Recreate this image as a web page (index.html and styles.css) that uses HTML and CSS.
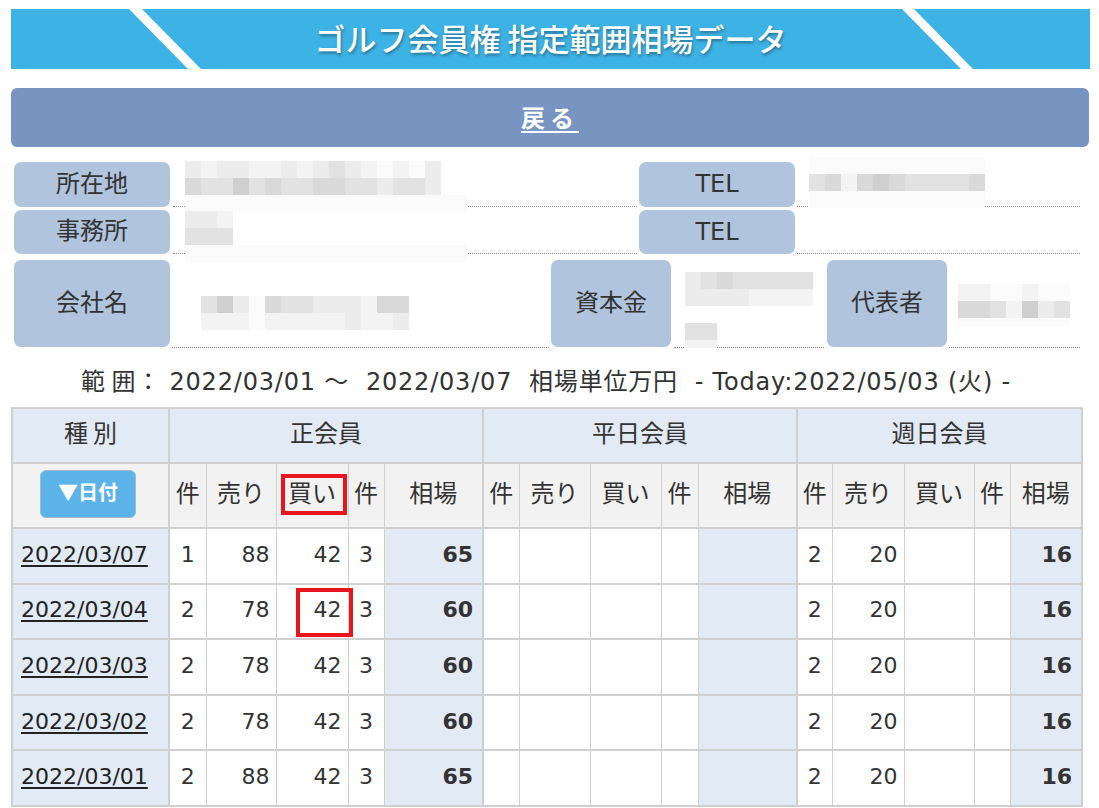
FILE: index.html
```html
<!DOCTYPE html>
<html lang="ja">
<head>
<meta charset="utf-8">
<title>ゴルフ会員権 指定範囲相場データ</title>
<link rel="stylesheet" href="styles.css">
</head>
<body>
<div class="page">
  <header class="banner"><h1>ゴルフ会員権 指定範囲相場データ</h1></header>
  <a class="back" href="#"><span>戻る</span></a>

  <section class="info">
    <div class="irow r1">
      <div class="lbl w156">所在地</div>
      <div class="val v1">
        <div class="mz m-addr">
          <div class="mrow"><i class="s2"></i><i class="s1"></i><i class="s2"></i><i class="s2"></i><i class="s1"></i><i class="s1"></i><i class="s2"></i><i class="s1"></i><i class="s2"></i><i class="s3"></i><i class="s2"></i><i class="s1"></i><i class="s0"></i><i class="s1"></i><i class="s0"></i><i class="s2"></i></div>
          <div class="mrow"><i class="s4"></i><i class="s3"></i><i class="s3"></i><i class="s5"></i><i class="s3"></i><i class="s4"></i><i class="s3"></i><i class="s3"></i><i class="s4"></i><i class="s4"></i><i class="s3"></i><i class="s3"></i><i class="s2"></i><i class="s3"></i><i class="s3"></i><i class="s2"></i></div>
          <div class="mrow"><i class="s0 wide"></i></div>
        </div>
      </div>
      <div class="lbl w156 en">TEL</div>
      <div class="val v2">
        <div class="mz m-tel">
          <div class="mrow"><i class="s0"></i><i class="s0"></i><i class="s0"></i><i class="s0"></i><i class="s0"></i><i class="s0"></i><i class="s0"></i><i class="s0"></i><i class="s0"></i><i class="s0"></i><i class="s0"></i></div>
          <div class="mrow"><i class="s3"></i><i class="s4"></i><i class="s1"></i><i class="s4"></i><i class="s5"></i><i class="s4"></i><i class="s3"></i><i class="s3"></i><i class="s3"></i><i class="s3"></i><i class="s4"></i></div>
          <div class="mrow"><i class="s0"></i><i class="s0"></i><i class="s0"></i><i class="s0"></i><i class="s0"></i><i class="s0"></i><i class="s0"></i><i class="s0"></i><i class="s0"></i><i class="s0"></i><i class="s0"></i></div>
        </div>
      </div>
    </div>

    <div class="irow r2">
      <div class="lbl w156">事務所</div>
      <div class="val v1">
        <div class="mz m-office">
          <div class="mrow"><i class="s2"></i><i class="s2"></i><i class="s1"></i></div>
          <div class="mrow"><i class="s3"></i><i class="s3"></i><i class="s3"></i></div>
          <div class="mrow"><i class="s0 wide"></i></div>
        </div>
      </div>
      <div class="lbl w156 en">TEL</div>
      <div class="val v2"></div>
    </div>

    <div class="irow r3">
      <div class="lbl w156">会社名</div>
      <div class="val v3">
        <div class="mz m-company">
          <div class="mrow"><i class="s3"></i><i class="s5"></i><i class="s2"></i><i class="s0"></i><i class="s4"></i><i class="s3"></i><i class="s3"></i><i class="s2"></i><i class="s2"></i><i class="s2"></i><i class="s1"></i><i class="s4"></i><i class="s4"></i></div>
          <div class="mrow"><i class="s1"></i><i class="s1"></i><i class="s1"></i><i class="s0"></i><i class="s1"></i><i class="s1"></i><i class="s1"></i><i class="s1"></i><i class="s1"></i><i class="s2"></i><i class="s1"></i><i class="s1"></i><i class="s2"></i></div>
        </div>
      </div>
      <div class="lbl w120">資本金</div>
      <div class="val v4">
        <div class="mz m-capital">
          <div class="mrow"><i class="s2"></i><i class="s3"></i><i class="s4"></i><i class="s3"></i><i class="s3"></i><i class="s3"></i><i class="s3"></i><i class="s3"></i></div>
          <div class="mrow"><i class="s2"></i><i class="s2"></i><i class="s2"></i><i class="s2"></i><i class="s1"></i><i class="s1"></i><i class="s1"></i><i class="s1"></i></div>
          <div class="mrow"></div>
          <div class="mrow"><i class="s3"></i><i class="s3"></i></div>
          <div class="mrow short"><i class="s1"></i><i class="s1"></i></div>
        </div>
      </div>
      <div class="lbl w120">代表者</div>
      <div class="val v5">
        <div class="mz m-rep">
          <div class="mrow"><i class="s1"></i><i class="s1"></i><i class="s0"></i><i class="s0"></i><i class="s1"></i><i class="s0"></i><i class="s0"></i></div>
          <div class="mrow"><i class="s4"></i><i class="s4"></i><i class="s3"></i><i class="s1"></i><i class="s5"></i><i class="s2"></i><i class="s3"></i></div>
          <div class="mrow short"><i class="s0"></i><i class="s0"></i><i class="s0"></i><i class="s0"></i><i class="s0"></i><i class="s0"></i><i class="s0"></i></div>
        </div>
      </div>
    </div>
  </section>

  <p class="range">範&#8201;囲：&nbsp;2022/03/01&nbsp;～&nbsp;&nbsp;2022/03/07&nbsp;&nbsp;相場単位万円&nbsp;&nbsp;-&nbsp;Today:2022/05/03&nbsp;(火)&nbsp;-</p>

  <table class="grid">
    <colgroup>
      <col class="c157">
      <col class="c37"><col class="c70"><col class="c72"><col class="c36"><col class="c99">
      <col class="c36"><col class="c71"><col class="c71"><col class="c37"><col class="c99">
      <col class="c35"><col class="c72"><col class="c70"><col class="c36"><col class="c72">
    </colgroup>
    <thead>
      <tr class="h1">
        <th>種&#8201;別</th>
        <th colspan="5" class="g">正会員</th>
        <th colspan="5" class="g">平日会員</th>
        <th colspan="5" class="g">週日会員</th>
      </tr>
      <tr class="h2">
        <th class="btncell"><button class="sort" type="button">▼日付</button></th>
        <th class="g">件</th><th>売り</th><th class="mark">買い<span class="redbox rb1"></span></th><th>件</th><th>相場</th>
        <th class="g">件</th><th>売り</th><th>買い</th><th>件</th><th>相場</th>
        <th class="g">件</th><th>売り</th><th>買い</th><th>件</th><th>相場</th>
      </tr>
    </thead>
    <tbody>
      <tr>
        <td class="date"><a href="#">2022/03/07</a></td>
        <td class="g n">1</td><td class="r">88</td><td class="r">42</td><td class="n">3</td><td class="p">65</td>
        <td class="g n"></td><td class="r"></td><td class="r"></td><td class="n"></td><td class="p"></td>
        <td class="g n">2</td><td class="r">20</td><td class="r"></td><td class="n"></td><td class="p">16</td>
      </tr>
      <tr>
        <td class="date"><a href="#">2022/03/04</a></td>
        <td class="g n">2</td><td class="r">78</td><td class="r mark">42<span class="redbox rb2"></span></td><td class="n">3</td><td class="p">60</td>
        <td class="g n"></td><td class="r"></td><td class="r"></td><td class="n"></td><td class="p"></td>
        <td class="g n">2</td><td class="r">20</td><td class="r"></td><td class="n"></td><td class="p">16</td>
      </tr>
      <tr>
        <td class="date"><a href="#">2022/03/03</a></td>
        <td class="g n">2</td><td class="r">78</td><td class="r">42</td><td class="n">3</td><td class="p">60</td>
        <td class="g n"></td><td class="r"></td><td class="r"></td><td class="n"></td><td class="p"></td>
        <td class="g n">2</td><td class="r">20</td><td class="r"></td><td class="n"></td><td class="p">16</td>
      </tr>
      <tr>
        <td class="date"><a href="#">2022/03/02</a></td>
        <td class="g n">2</td><td class="r">78</td><td class="r">42</td><td class="n">3</td><td class="p">60</td>
        <td class="g n"></td><td class="r"></td><td class="r"></td><td class="n"></td><td class="p"></td>
        <td class="g n">2</td><td class="r">20</td><td class="r"></td><td class="n"></td><td class="p">16</td>
      </tr>
      <tr>
        <td class="date"><a href="#">2022/03/01</a></td>
        <td class="g n">2</td><td class="r">88</td><td class="r">42</td><td class="n">3</td><td class="p">65</td>
        <td class="g n"></td><td class="r"></td><td class="r"></td><td class="n"></td><td class="p"></td>
        <td class="g n">2</td><td class="r">20</td><td class="r"></td><td class="n"></td><td class="p">16</td>
      </tr>
    </tbody>
  </table>
</div>
</body>
</html>
```

FILE: styles.css
```css
* { box-sizing: border-box; }

html, body {
  margin: 0;
  padding: 0;
  background: #fff;
}

body {
  font-family: "DejaVu Sans", "Noto Sans CJK JP", sans-serif;
  color: #333;
  font-size: 22px;
}

.page {
  padding: 9px 9px 0 11px;
}

/* ---------- banner ---------- */
.banner {
  position: relative;
  height: 60px;
  background: #3db2e4;
  display: flex;
  align-items: center;
  justify-content: center;
  overflow: hidden;
}

.banner::before,
.banner::after {
  content: "";
  position: absolute;
  top: 0;
  height: 60px;
  background: #fff;
  transform-origin: top left;
  transform: skewX(44.5deg);
}

.banner::before { left: 118px; width: 13px; }
.banner::after { left: 891px; width: 12px; }

.banner h1 {
  position: relative;
  z-index: 1;
  margin: 0;
  padding-bottom: 4px;
  font-family: "Noto Sans CJK JP", sans-serif;
  font-weight: 500;
  font-size: 31px;
  color: #fff;
  letter-spacing: 0;
  text-shadow: 1px 2px 3px rgba(0, 0, 0, 0.35);
}

/* ---------- back ---------- */
.back {
  display: flex;
  align-items: center;
  justify-content: center;
  margin-top: 19px;
  width: 1078px;
  height: 59px;
  background: #7895c2;
  border-radius: 6px;
  color: #fff;
  text-decoration: none;
}

.back span {
  font-family: "Noto Sans CJK JP", sans-serif;
  font-weight: 700;
  font-size: 24px;
  letter-spacing: 5px;
  padding-bottom: 3px;
  text-decoration: underline;
  text-underline-offset: 4px;
  text-decoration-thickness: 2px;
}

/* ---------- info ---------- */
.info {
  margin-top: 15px;
  padding-left: 3px;
  width: 1069px;
}

.irow {
  display: flex;
  align-items: stretch;
}

.r1 { height: 45px; }
.r2 { height: 44px; margin-top: 3px; }
.r3 { height: 88px; margin-top: 6px; }

.lbl {
  flex: none;
  display: flex;
  align-items: center;
  justify-content: center;
  background: #b0c4de;
  border-radius: 7px;
  color: #333;
  font-size: 24px;
  padding-bottom: 7px;
}

.lbl.en { padding-bottom: 1px; }

.r3 .lbl { height: 87px; }

.w156 { width: 156px; }
.w120 { width: 120px; }

.val {
  flex: none;
  border-bottom: 1px dotted #8f8f8f;
}

.v1 { width: 464px; margin: 0 2px 0 3px; }
.v2 { width: 283px; margin-left: 2px; }
.v3 { width: 377px; margin: 0 2px; }
.v4 { width: 150px; margin: 0 3px; }
.v5 { width: 131px; margin-left: 2px; }

/* pixelated (masked) values */
.mz { display: flex; flex-direction: column; }
.mrow { display: flex; height: 17px; }
.mrow.short { height: 8px; }
.mrow i { display: block; width: 16px; flex: none; }
.mrow i.wide { width: 282px; }

.s0 { background: #fbfbfb; }
.s1 { background: #f3f3f3; }
.s2 { background: #ececec; }
.s3 { background: #e2e2e2; }
.s4 { background: #d9d9d9; }
.s5 { background: #cfcfcf; }

.m-addr { margin: -1px 0 0 12px; }
.m-office { margin: 1px 0 0 12px; }
.m-tel { margin: -5px 0 0 12px; }
.m-company { margin: 36px 0 0 29px; }
.m-capital { margin: 12px 0 0 11px; }
.m-rep { margin: 24px 0 0 9px; }

/* ---------- range ---------- */
.range {
  margin: 0;
  width: 1070px;
  height: 59px;
  padding-top: 3px;
  display: flex;
  align-items: center;
  justify-content: center;
  font-size: 24px;
  letter-spacing: 0.8px;
  color: #333;
  white-space: nowrap;
}

/* ---------- table ---------- */
.grid {
  border-collapse: collapse;
  table-layout: fixed;
  width: 1070px;
  border: 2px solid #cfcfcf;
}

.c157 { width: 157px; }
.c99 { width: 99px; }
.c72 { width: 72px; }
.c71 { width: 71px; }
.c70 { width: 70px; }
.c37 { width: 37px; }
.c36 { width: 36px; }
.c35 { width: 35px; }

.grid th,
.grid td {
  border: 1px solid #d0d0d0;
  padding: 0 0 3px;
  font-size: 22px;
  color: #333;
  white-space: nowrap;
}

.grid th {
  font-weight: 400;
  text-align: center;
  font-size: 24px;
  padding-bottom: 8px;
}

.grid th.btncell { padding-bottom: 3px; }

.grid tr { border-top: 2px solid #d0d0d0; }
.grid .g { border-left: 2px solid #d0d0d0; }
.grid tr > :first-child + * { border-left: 2px solid #d0d0d0; }

.h1 { height: 55px; }
.h1 th { background: #e2eaf6; }
.h2 { height: 65px; }
.h2 th { background: #f2f2f2; }

.grid tbody tr { height: 55.6px; }

.grid td.date {
  background: #e2eaf6;
  padding-left: 8px;
}

.date a {
  color: #222;
  text-decoration: underline;
  text-underline-offset: 3px;
}

.grid td.n { text-align: center; }
.grid td.r { text-align: right; padding-right: 6px; }
.grid td.p {
  text-align: right;
  padding-right: 9px;
  background: #e2eaf6;
  font-weight: 700;
}

.sort {
  width: 96px;
  height: 48px;
  margin-left: -5px;
  border: 1px solid #a8b8c8;
  border-radius: 6px;
  background: #5cb3ea;
  color: #fff;
  font-family: "Noto Sans CJK JP", sans-serif;
  font-weight: 700;
  font-size: 20px;
  padding: 0 0 5px;
  cursor: pointer;
}

/* red highlight marks */
.mark { position: relative; }

.redbox {
  position: absolute;
  border: 4px solid #e8141e;
  pointer-events: none;
}

.rb1 { left: 4px; top: 10px; width: 66px; height: 41px; }
.rb2 { left: 19px; top: 3px; width: 57px; height: 49px; }
```
